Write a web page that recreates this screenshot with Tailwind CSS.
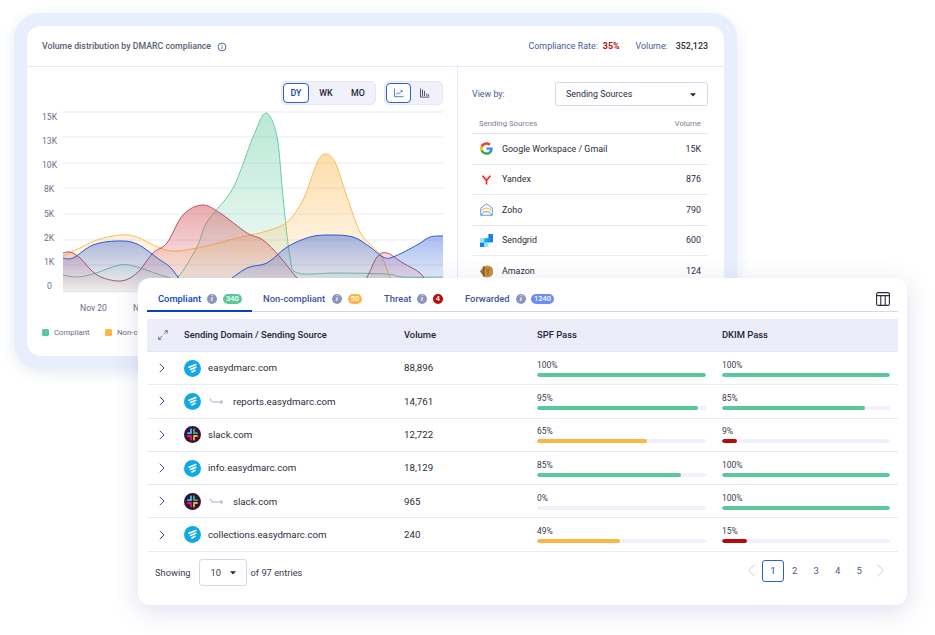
<!DOCTYPE html>
<html lang="en">
<head>
    <meta charset="UTF-8">
    <title>DMARC compliance</title>
    <script src="https://cdn.jsdelivr.net/npm/@tailwindcss/browser@4"></script>
</head>
<body class="bg-white [font-family:Roboto,sans-serif] overflow-hidden">
<div class="relative w-[935px] h-[635px] pt-[13px] pl-[14px]">

    <!-- back card: chart + sending sources -->
    <div class="w-[723px] h-[356px] p-[13px] rounded-[26px] bg-[#e9eefc] shadow-[0_4px_14px_rgba(90,110,180,0.14)]">
        <div class="h-full rounded-[14px] bg-white flex flex-col overflow-hidden">
            <div class="h-[41px] shrink-0 pt-[2px] flex items-center justify-between pl-[15px] pr-[16px] border-b border-[#e3e9fb]">
                <div class="flex items-center gap-[6px] text-[8.8px] font-medium text-[#5b5e73]">
                    Volume distribution by DMARC compliance
                    <svg width="10" height="10" viewBox="0 0 10 10" fill="none" stroke="#3f5398"><circle cx="5" cy="5" r="3.9" stroke-width="0.9"/><path d="M5 4.6v2.2M5 3v.9" stroke-width="0.9"/></svg>
                </div>
                <div class="flex items-center text-[8.9px] text-[#4a5a94]">
                    <span>Compliance Rate:</span>
                    <span class="ml-[5px] font-bold text-[#b90a0a]">35%</span>
                    <span class="ml-[16px]">Volume:</span>
                    <span class="ml-[8px] font-medium text-[#2b2c3b]">352,123</span>
                </div>
            </div>
            <div class="flex flex-1 min-h-0">
                <div class="w-[431px] shrink-0 border-r border-[#e3e9fb]">
                    <div class="flex justify-end gap-[8px] pt-[14px] pr-[14px]">
                        <div class="h-[24px] w-[95px] p-[2px] flex items-stretch rounded-[5px] bg-[#f1f1fb] border border-[#e5e7f6] text-[8.8px] font-medium text-[#23243a]">
                            <span class="w-[26px] -m-px pt-[2px] flex items-center justify-center rounded-[4px] bg-white border border-[#2b5fcf] text-[#0b3fc4]">DY</span>
                            <span class="w-[36px] pt-[2px] flex items-center justify-center">WK</span>
                            <span class="w-[28px] pt-[2px] flex items-center justify-center">MO</span>
                        </div>
                        <div class="h-[24px] w-[59px] p-[2px] flex items-stretch rounded-[5px] bg-[#f1f1fb] border border-[#e5e7f6]">
                            <span class="w-[25px] -m-px flex items-center justify-center rounded-[4px] bg-white border border-[#2b5fcf]">
                                <svg width="10" height="10" viewBox="0 0 10 10" fill="none" stroke="#2b5fcf" stroke-width="0.8"><path d="M.5.5v8.2h9"/><path d="M2 6.5 4 4.8l1.2.8L8 2.8"/><path d="M6.6 2.6H8.2V4"/></svg>
                            </span>
                            <span class="flex-1 flex items-center justify-center">
                                <svg width="10" height="10" viewBox="0 0 10 10" fill="none" stroke="#3f4460" stroke-width="0.9"><path d="M.5.5v8.6h9"/><path d="M2.5 8V1.5M4.5 8V3M6.8 8V5.5M8.6 8V6.5"/></svg>
                            </span>
                        </div>
                    </div>
                    <svg id="chart" class="block mt-[2px]" width="430" height="215" viewBox="27 107 430 215" font-size="8.6" fill="#6b6e85">
                        <defs>
                            <linearGradient id="fillGreen" x1="0" y1="0" x2="0" y2="1"><stop offset="0" stop-color="#5bc89b" stop-opacity="0.42"/><stop offset="1" stop-color="#5bc89b" stop-opacity="0.04"/></linearGradient>
                            <linearGradient id="fillOrange" x1="0" y1="0" x2="0" y2="1"><stop offset="0" stop-color="#fdb544" stop-opacity="0.45"/><stop offset="1" stop-color="#fdb544" stop-opacity="0.03"/></linearGradient>
                            <linearGradient id="fillRed" x1="0" y1="0" x2="0" y2="1"><stop offset="0" stop-color="#d4434a" stop-opacity="0.45"/><stop offset="1" stop-color="#d4434a" stop-opacity="0.04"/></linearGradient>
                            <linearGradient id="fillBlue" x1="0" y1="0" x2="0" y2="1"><stop offset="0" stop-color="#2a5bd7" stop-opacity="0.42"/><stop offset="1" stop-color="#2a5bd7" stop-opacity="0.02"/></linearGradient>
                        </defs>
                        <g stroke="#f0f1fb" stroke-width="1.4">
                            <path d="M63 112H443M63 137H443M63 163H443M63 188H443M63 214H443M63 240H443M63 265H443M63 292H443"/>
                        </g>
                        <g id="series"></g>
                        <g>
                            <text x="42" y="120">15K</text><text x="42" y="144">13K</text><text x="42" y="168">10K</text><text x="44" y="192">8K</text>
                            <text x="44" y="217">5K</text><text x="44" y="241">2K</text><text x="44" y="265">1K</text><text x="47" y="289">0</text>
                            <text x="80" y="311">Nov 20</text><text x="133" y="311">Nov 21</text>
                        </g>
                    </svg>
                    <div class="mt-[5px] pl-[15px] flex items-center text-[7.8px] text-[#6b6e85]">
                        <span class="w-[7px] h-[7px] rounded-[1.5px] bg-[#5bc89b]"></span>
                        <span class="ml-[5px] w-[51px]">Compliant</span>
                        <span class="w-[7px] h-[7px] rounded-[1.5px] bg-[#fdb544]"></span>
                        <span class="ml-[5px]">Non-compliant</span>
                    </div>
                </div>

                <div class="flex-1 min-w-0 pt-[15px] pl-[14px] pr-[16px]">
                    <div class="flex items-center justify-between">
                        <span class="pt-[2px] text-[8.9px] text-[#4a5a94]">View by:</span>
                        <div class="w-[153px] h-[24px] pt-[2px] pl-[10px] pr-[11px] flex items-center justify-between rounded-[3px] border border-[#d5d8e8] text-[8.9px] text-[#2b2c3b]">
                            Sending Sources
                            <svg width="6" height="4" viewBox="0 0 6 4" fill="#23243a"><path d="M0 .3h6L3 3.6z"/></svg>
                        </div>
                    </div>
                    <div class="mt-[12px] h-[16px] px-[7px] flex items-start justify-between border-b border-[#e3e5f0] text-[7.8px] text-[#7d8094]">
                        <span>Sending Sources</span><span>Volume</span>
                    </div>
                    <div id="sources"></div>
                </div>
            </div>
        </div>
    </div>

    <!-- front card: domains table, lies over the chart -->
    <div class="absolute left-[138px] top-[278px] w-[769px] h-[327px] rounded-[12px] bg-white shadow-[0_6px_26px_rgba(70,85,160,0.18)] px-[9px]">
        <div class="relative h-[34px] pt-[9px] flex items-center border-b border-[#d5d8e8] text-[9.4px] font-medium whitespace-nowrap text-[#3f5398]">
            <div class="absolute left-0 -bottom-px w-[105px] h-[2px] bg-[#0b3fc4]"></div>
            <span class="w-[43px] ml-[11px] pt-px text-[#0b3fc4]">Compliant</span>
            <span class="ml-[6px] w-[10px] h-[10px] rounded-full bg-[#8c96bc] text-white text-[7px] italic font-bold flex items-center justify-center">i</span>
            <span class="ml-[6px] w-[19px] h-[10px] rounded-full bg-[#5bc89b] text-white text-[7.5px] flex items-center justify-center">340</span>
            <span class="ml-[21px] w-[63px] pt-px">Non-compliant</span>
            <span class="ml-[6px] w-[10px] h-[10px] rounded-full bg-[#8c96bc] text-white text-[7px] italic font-bold flex items-center justify-center">i</span>
            <span class="ml-[6px] w-[14px] h-[10px] rounded-full bg-[#fdb544] text-white text-[7.5px] flex items-center justify-center">50</span>
            <span class="ml-[22px] w-[27px] pt-px">Threat</span>
            <span class="ml-[6px] w-[10px] h-[10px] rounded-full bg-[#8c96bc] text-white text-[7px] italic font-bold flex items-center justify-center">i</span>
            <span class="ml-[6px] w-[10px] h-[10px] rounded-full bg-[#b90a0a] text-white text-[7.5px] flex items-center justify-center">4</span>
            <span class="ml-[22px] w-[45px] pt-px">Forwarded</span>
            <span class="ml-[6px] w-[10px] h-[10px] rounded-full bg-[#8c96bc] text-white text-[7px] italic font-bold flex items-center justify-center">i</span>
            <span class="ml-[5px] w-[23px] h-[10px] rounded-full bg-[#6b8cf8] text-white text-[7.5px] flex items-center justify-center">1240</span>
            <svg class="ml-auto mr-[8px] -mt-[1px]" width="14" height="14" viewBox="0 0 14 14" fill="none" stroke="#2b2c3b" stroke-width="1.1"><rect x=".6" y=".6" width="12.8" height="12.8" rx="1.5"/><path d="M.6 3.6h12.8M4.8 3.6v9.8M9.2 3.600v9.800"/></svg>
        </div>
        <div class="mt-[7px] h-[33px] grid grid-cols-[37px_220px_133px_185px_1fr] items-center bg-[#ecedf8] border-b border-[#e3e5f0] text-[9.4px] font-medium text-[#23243a]">
            <svg class="ml-[11px]" width="10" height="10" viewBox="0 0 10 10" fill="none" stroke="#4a5a78" stroke-width="0.8"><path d="M5.8 4.2 9.3.7M6.600.7h2.700v2.700M4.200 5.800.7 9.300M.7 6.600v2.700h2.700"/></svg>
            <span class="pt-px">Sending Domain / Sending Source</span>
            <span class="pt-px">Volume</span>
            <span class="pt-px">SPF Pass</span>
            <span class="pt-px">DKIM Pass</span>
        </div>
        <div id="rows"></div>
        <div class="mt-[7px] h-[27px] pl-[8px] pr-[13px] flex items-center text-[9.3px] text-[#3a3b4d]">
            <span class="pt-px">Showing</span>
            <div class="ml-[8px] w-[48px] h-[27px] pt-px pl-[11px] pr-[10px] flex items-center justify-between rounded-[3px] border border-[#d5d8e8]">
                10
                <svg width="6" height="4" viewBox="0 0 6 4" fill="#23243a"><path d="M0 .3h6L3 3.6z"/></svg>
            </div>
            <span class="ml-[4px] pt-px">of 97 entries</span>
            <div class="ml-auto -mt-[3px] flex items-center text-[9.5px] text-[#4a5a94]">
                <svg class="mr-[6px]" width="9" height="13" viewBox="0 0 9 13" fill="none" stroke="#c9cde4"><path d="M7.5.8 1.5 6.5l6 5.700"/></svg>
                <span class="w-[22px] h-[22px] flex items-center justify-center rounded-[3px] border border-[#2b5fcf] text-[#0b3fc4]">1</span>
                <span class="w-[21.5px] text-center">2</span>
                <span class="w-[21.5px] text-center">3</span>
                <span class="w-[21.5px] text-center">4</span>
                <span class="w-[21.5px] text-center">5</span>
                <svg class="ml-[6px]" width="9" height="13" viewBox="0 0 9 13" fill="none" stroke="#c9cde4"><path d="M1.5.8l6 5.700-6 5.700"/></svg>
            </div>
        </div>
    </div>
</div>

<script>
    // chart curves, in page coordinates
    const series = [
        { stroke: '#6fc9a3', fill: 'fillGreen', pts: [[63,275],[77,277],[93,274],[120,265],[137,267],[167,277],[178,277],[197,247],[207,222],[233,188],[253,137],[266,113],[277,137],[283,197],[290,257],[298,273],[337,273],[387,274],[403,277],[443,277]] },
        { stroke: '#fdbb55', fill: 'fillOrange', pts: [[63,256],[80,248],[97,240],[120,235],[137,237],[160,248],[177,251],[207,246],[237,238],[267,231],[287,222],[303,200],[317,163],[325,154],[335,162],[347,197],[360,232],[373,247],[382,257],[392,282],[400,291]] },
        { stroke: '#b5555b', fill: 'fillRed', pts: [[63,253],[70,252],[80,258],[97,275],[120,281],[137,273],[153,253],[167,243],[183,215],[202,205],[220,213],[247,233],[263,240],[280,257],[297,278],[310,291],[355,291],[367,277],[377,257],[387,253],[403,263],[420,273],[430,287],[436,291]] },
        { stroke: '#2a5bd7', fill: 'fillBlue', pts: [[63,258],[73,258],[93,245],[117,241],[137,244],[160,260],[170,267],[183,283],[195,291],[210,291],[225,283],[247,268],[267,263],[287,247],[310,237],[330,235],[353,237],[370,247],[383,257],[393,257],[417,245],[430,237],[443,236]] }
    ];

    function curve(pts) {
        let d = `M${pts[0][0]} ${pts[0][1]}`;
        for (let i = 0; i < pts.length - 1; i++) {
            const p0 = pts[i - 1] || pts[i], p1 = pts[i], p2 = pts[i + 1], p3 = pts[i + 2] || p2;
            const c1x = p1[0] + (p2[0] - p0[0]) / 6, c1y = p1[1] + (p2[1] - p0[1]) / 6;
            const c2x = p2[0] - (p3[0] - p1[0]) / 6, c2y = p2[1] - (p3[1] - p1[1]) / 6;
            d += ` C${c1x} ${c1y} ${c2x} ${c2y} ${p2[0]} ${p2[1]}`;
        }
        return d;
    }

    document.getElementById('series').innerHTML = series.map(s => {
        const line = curve(s.pts);
        const last = s.pts[s.pts.length - 1];
        return `<path d="${line} L${last[0]} 292 L63 292 Z" fill="url(#${s.fill})" stroke="none"/>
                <path d="${line}" fill="none" stroke="${s.stroke}" stroke-width="1"/>`;
    }).join('');

    const logos = {
        google: `<svg width="13" height="13" viewBox="0 0 48 48"><path fill="#ea4335" d="M24 10c3.500 0 6.700 1.200 9.200 3.600l6.800-6.800C35.900 3 30.400.7 24 .7 14.700.7 6.700 6 2.800 13.800l8 6.200C12.700 14.200 17.900 10 24 10z"/><path fill="#4285f4" d="M46.900 24.500c0-1.600-.2-3.100-.4-4.500H24v9h12.900c-.6 3-2.200 5.500-4.700 7.200l7.700 6c4.500-4.200 7-10.300 7-17.700z"/><path fill="#fbbc05" d="M10.800 28.600c-.5-1.400-.8-3-.8-4.600s.3-3.100.8-4.600l-8-6.200C1.200 16.500.300 20.100.300 24s.9 7.500 2.500 10.800z"/><path fill="#34a853" d="M24 47.300c6.400 0 11.800-2.100 15.900-5.700l-7.700-6c-2.100 1.400-4.900 2.300-8.200 2.300-6.100 0-11.300-4.100-13.200-9.700l-8 6.200C6.700 42 14.700 47.300 24 47.300z"/></svg>`,
        yandex: `<svg width="13" height="13" viewBox="0 0 14 14"><circle cx="7" cy="7" r="7" fill="#fbf7f8"/><path d="M2.800 3 7 8l4.200-5M7 7.500V12.500" fill="none" stroke="#f0222b" stroke-width="1.700"/></svg>`,
        zoho: `<svg width="13" height="13" viewBox="0 0 14 14" fill="none" stroke="#3f86d8" stroke-width="0.9"><path d="M.8 5.500 7 .8l6.200 4.700v7.700H.8z"/><path d="M.8 13.200 5 9.500h4l4.200 3.700"/><path d="M2.500 6.500c2-1.200 7-1.200 9 0-.5 2-1.500 3-4.500 3s-4-1-4.500-3z" stroke="#f2b53c"/></svg>`,
        sendgrid: `<svg width="13" height="13" viewBox="0 0 14 14"><rect x="9" y="0" width="5" height="5" fill="#1a82e2"/><rect x="4.500" y="4.500" width="5" height="5" fill="#00b2e3"/><rect x="9" y="4.500" width="5" height="4.500" fill="#1a82e2"/><rect x="0" y="9" width="5" height="5" fill="#1a82e2"/><rect x="0" y="4.500" width="4.500" height="4.500" fill="#99e1f4"/><rect x="4.500" y="9" width="4.500" height="5" fill="#99e1f4"/></svg>`,
        amazon: `<svg width="13" height="13" viewBox="0 0 14 14"><circle cx="8" cy="7" r="6.500" fill="#c9913f"/><path d="M0 7 2.500 3.500v7z" fill="#9d6a2c"/><path d="M3 2 5 1v12l-2-1z" fill="#8a5a22"/><path d="M6.500 3.500 8.500 7l2-3.500M8.500 7v4" stroke="#7c5220" stroke-width=".8" fill="none"/></svg>`
    };

    const sources = [
        ['google', 'Google Workspace / Gmail', '15K'],
        ['yandex', 'Yandex', '876'],
        ['zoho', 'Zoho', '790'],
        ['sendgrid', 'Sendgrid', '600'],
        ['amazon', 'Amazon', '124']
    ];
    document.getElementById('sources').innerHTML = sources.map(s => `
        <div class="h-[30.6px] pl-[8px] pr-[7px] flex items-center border-b border-[#e8e9f2] text-[8.9px] text-[#2b2c3b]">
            ${logos[s[0]]}
            <span class="ml-[9px] pt-px">${s[1]}</span>
            <span class="ml-auto pt-px">${s[2]}</span>
        </div>`).join('');

    const easydmarc = `<svg width="17" height="17" viewBox="0 0 17 17"><circle cx="8.500" cy="8.500" r="8.500" fill="#12a9e2"/><path d="M5 7.200 11.800 4.500M6.500 9.500l5.300-2.200M8 12l3-1.700" stroke="#fff" stroke-width="1.600" stroke-linecap="round"/></svg>`;
    const slack = `<svg width="17" height="17" viewBox="0 0 17 17"><circle cx="8.500" cy="8.500" r="8.500" fill="#38123a"/><g stroke-width="1.800" stroke-linecap="round"><path d="M7 3.500v3.200M4 7.200h3" stroke="#36c5f0"/><path d="M10 3.500v3.700M10 7.200h3" stroke="#2eb67d"/><path d="M10 13.500v-3.200M10 10h3" stroke="#ecb22e"/><path d="M7 13.500V10M4 10h3" stroke="#e01e5a"/></g></svg>`;
    const arrow = `<svg class="ml-[9px] mr-[10px]" width="13" height="7" viewBox="0 0 13 7" fill="none" stroke="#9aa2c8" stroke-width="0.9"><path d="M.5.500c0 2 .8 3.500 2.500 3.500h9.500M10.500 2l2 2-2 2"/></svg>`;
    const barColor = { green: 'bg-[#5bc89b]', orange: 'bg-[#fdb544]', red: 'bg-[#b90a0a]' };

    function bar(value, color, pad) {
        return `<div class="${pad}">
            <div class="text-[8.5px] leading-[10px] text-[#3a3b4d]">${value}%</div>
            <div class="mt-[3px] h-[4px] rounded-full bg-[#f1f1fd] overflow-hidden">
                <div class="h-full rounded-full ${barColor[color]}" style="width:${value}%"></div>
            </div>
        </div>`;
    }

    const rows = [
        [easydmarc, false, 'easydmarc.com', '88,896', 100, 'green', 100, 'green'],
        [easydmarc, true, 'reports.easydmarc.com', '14,761', 95, 'green', 85, 'green'],
        [slack, false, 'slack.com', '12,722', 65, 'orange', 9, 'red'],
        [easydmarc, false, 'info.easydmarc.com', '18,129', 85, 'green', 100, 'green'],
        [slack, true, 'slack.com', '965', 0, 'green', 100, 'green'],
        [easydmarc, false, 'collections.easydmarc.com', '240', 49, 'orange', 15, 'red']
    ];
    document.getElementById('rows').innerHTML = rows.map(r => `
        <div class="h-[33.3px] grid grid-cols-[37px_220px_133px_185px_1fr] items-center border-b border-[#e8e9f2] text-[9.7px] text-[#2b2c3b]">
            <svg class="ml-[12px]" width="6" height="10" viewBox="0 0 6 10" fill="none" stroke="#3f5398"><path d="M.8.8 5 5 .8 9.200"/></svg>
            <div class="flex items-center">
                ${r[0]}
                ${r[1] ? arrow : '<span class="w-[7px]"></span>'}
                <span class="pt-px">${r[2]}</span>
            </div>
            <span class="pt-px">${r[3]}</span>
            ${bar(r[4], r[5], 'pr-[16px]')}
            ${bar(r[6], r[7], 'pr-[8px]')}
        </div>`).join('');
</script>
</body>
</html>
